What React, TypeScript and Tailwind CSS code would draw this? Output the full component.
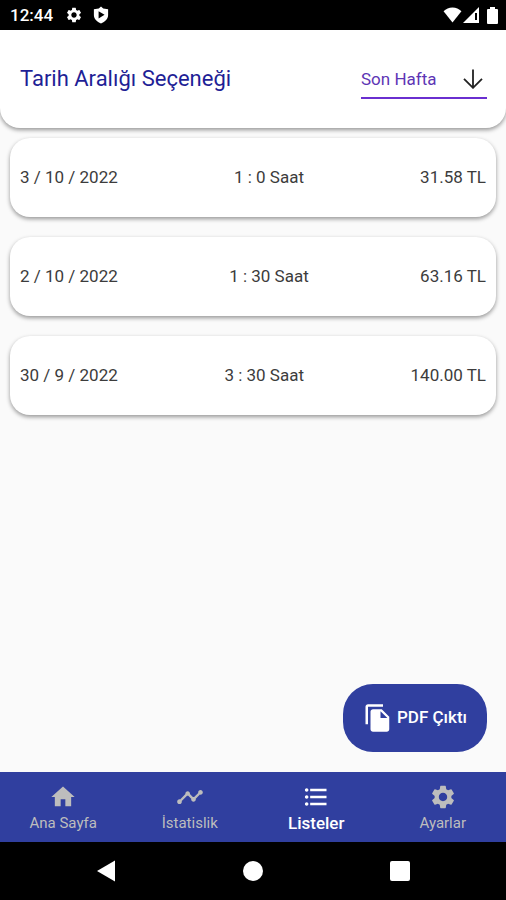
import { useState } from "react"
import type { IconType } from "react-icons"
import {
  MdFileCopy,
  MdFormatListBulleted,
  MdHome,
  MdSettings,
  MdTimeline,
} from "react-icons/md"
import clsx from "clsx"

const entries = [
  { date: "3 / 10 / 2022", duration: "1 : 0 Saat", amount: "31.58 TL" },
  { date: "2 / 10 / 2022", duration: "1 : 30 Saat", amount: "63.16 TL" },
  { date: "30 / 9 / 2022", duration: "3 : 30 Saat", amount: "140.00 TL" },
]

const tabs: { label: string; icon: IconType }[] = [
  { label: "Ana Sayfa", icon: MdHome },
  { label: "İstatislik", icon: MdTimeline },
  { label: "Listeler", icon: MdFormatListBulleted },
  { label: "Ayarlar", icon: MdSettings },
]

const StatusBar = () => (
  <div className="flex h-[30px] items-center bg-black pr-2 pl-[10px] text-white">
    <span className="text-[17px] leading-5 font-medium">12:44</span>
    <MdSettings className="ml-3 size-[18px]" />
    {/* Play Protect shield */}
    <svg viewBox="0 0 18 20" className="ml-[10px] h-[18px] w-4" fill="currentColor">
      <path
        fillRule="evenodd"
        d="M9 0.5 11.5 2.6 17 3.6V10c0 4.4-3.4 7.6-8 9.5C4.4 17.6 1 14.4 1 10V3.6l5.5-1ZM6.3 5.8v8L13 9.8Z"
      />
    </svg>
    <div className="ml-auto flex items-center">
      <svg viewBox="0 0 20 17" className="h-4 w-[19px]" fill="currentColor">
        <path d="M10 16.5 0.5 4.5C3 2 6.3 0.5 10 0.5s7 1.5 9.5 4Z" />
      </svg>
      <svg viewBox="0 0 16 16" className="ml-px size-4" fill="currentColor">
        <path fillRule="evenodd" d="M0 16 16 0V16ZM12 6v7h2V6Z" />
      </svg>
      <svg viewBox="0 0 11 17" className="ml-2 h-[17px] w-[11px]" fill="currentColor">
        <path d="M3 0h5v2h2a1 1 0 0 1 1 1v13a1 1 0 0 1-1 1H1a1 1 0 0 1-1-1V3a1 1 0 0 1 1-1h2Z" />
      </svg>
    </div>
  </div>
)

const Header = () => {
  const [range, setRange] = useState("Son Hafta")

  return (
    <header className="flex h-[98px] items-center justify-between rounded-b-[20px] bg-white pr-[19px] pl-5 shadow-[0_2px_4px_rgba(0,0,0,0.4)]">
      <h1 className="text-[22px] leading-7 text-[#1f1f96]">
        <label htmlFor="range">Tarih Aralığı Seçeneği</label>
      </h1>
      <div className="relative">
        <select
          id="range"
          value={range}
          onChange={(e) => setRange(e.target.value)}
          className="h-10 w-[126px] appearance-none border-b-2 border-[#6a2fd0] pt-1 text-[17px] text-[#5d35b5] outline-none"
        >
          <option>Son Hafta</option>
          <option>Son Ay</option>
          <option>Son Yıl</option>
        </select>
        <svg
          viewBox="0 0 20 20"
          className="pointer-events-none absolute top-[10px] right-1 size-5 text-[#222222]"
          fill="none"
          stroke="currentColor"
          strokeWidth="1.8"
        >
          <path d="M10 0.5V18.5M1 9.8l9 9 9-9" />
        </svg>
      </div>
    </header>
  )
}

const EntryList = () => (
  <ul className="flex flex-col gap-5 p-[10px]">
    {entries.map((entry) => (
      <li
        key={entry.date}
        className="flex h-[79px] items-center justify-between rounded-[20px] bg-white px-[10px] text-[17px] text-[#3c3c3c] shadow-[0_2px_4px_rgba(0,0,0,0.4)]"
      >
        <span>{entry.date}</span>
        <span>{entry.duration}</span>
        <span>{entry.amount}</span>
      </li>
    ))}
  </ul>
)

const BottomNav = () => {
  const [active, setActive] = useState("Listeler")

  return (
    <nav className="grid h-[70px] grid-cols-4 bg-[#303f9f]">
      {tabs.map(({ label, icon: Icon }) => (
        <button
          key={label}
          type="button"
          onClick={() => setActive(label)}
          className={clsx(
            "flex flex-col items-center justify-center pt-1",
            active === label
              ? "text-[17px] font-medium text-white"
              : "text-[15px] text-[#bdbdbd]"
          )}
        >
          <Icon className="size-7" />
          <span className="leading-6">{label}</span>
        </button>
      ))}
    </nav>
  )
}

const SystemNav = () => (
  <div className="grid h-[58px] grid-cols-3 items-center justify-items-center bg-black px-8 text-white">
    <button type="button" aria-label="Geri">
      <svg viewBox="0 0 20 22" className="h-[22px] w-5" fill="currentColor">
        <path d="M19 0.5V21.5L1 11Z" />
      </svg>
    </button>
    <button type="button" aria-label="Ana ekran" className="size-5 rounded-full bg-white" />
    <button type="button" aria-label="Son uygulamalar" className="size-5 rounded-xs bg-white" />
  </div>
)

const App = () => (
  <div className="flex min-h-screen flex-col bg-[#fafafa] font-['Roboto',sans-serif]">
    <StatusBar />
    <Header />
    <main className="relative flex-1">
      <EntryList />
      <button
        type="button"
        className="absolute right-[19px] bottom-5 flex h-[68px] w-36 items-center justify-center gap-1 rounded-[30px] bg-[#303f9f] text-[17px] font-medium text-white"
      >
        <MdFileCopy className="size-[30px]" />
        PDF Çıktı
      </button>
    </main>
    <BottomNav />
    <SystemNav />
  </div>
)

export default App
